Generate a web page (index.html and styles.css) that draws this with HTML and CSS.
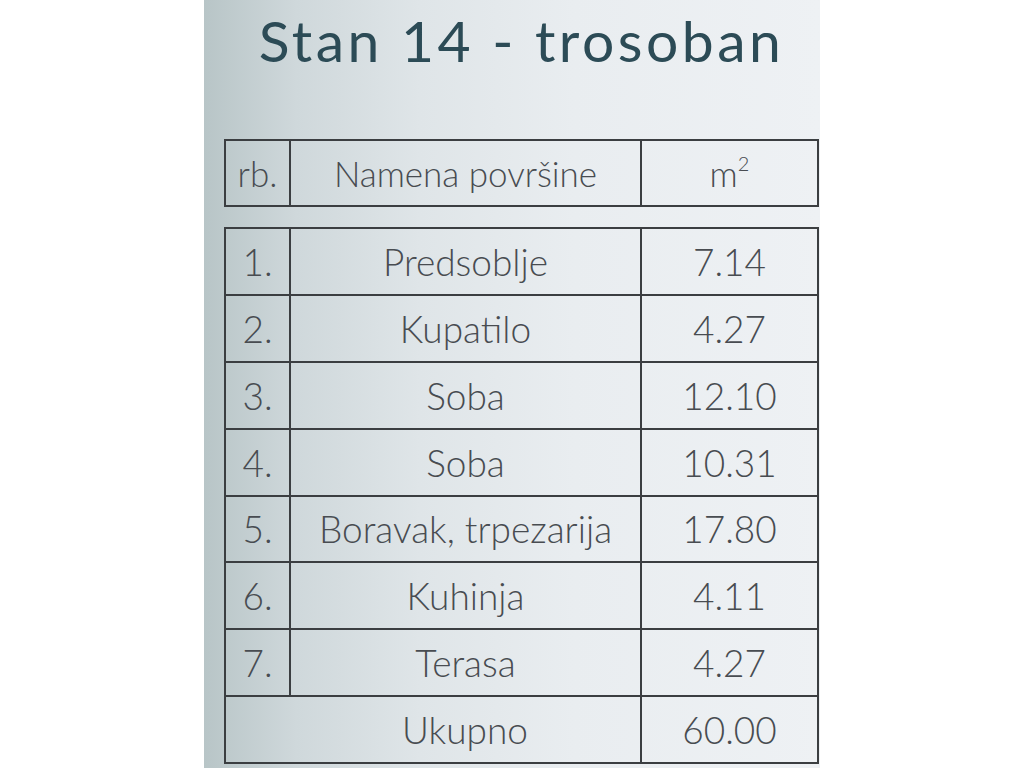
FILE: index.html
```html
<!DOCTYPE html>
<html lang="sr">
<head>
<meta charset="utf-8">
<title>Stan 14 - trosoban</title>
<link rel="stylesheet" href="styles.css">
</head>
<body>
<div class="panel">
  <h1 class="title">Stan 14 - trosoban</h1>
  <table class="grid head">
    <tr>
      <td class="c-rb">rb.</td>
      <td class="c-name">Namena površine</td>
      <td class="c-val">m<sup>2</sup></td>
    </tr>
  </table>
  <table class="grid body">
    <tr><td class="c-rb">1.</td><td class="c-name">Predsoblje</td><td class="c-val">7.14</td></tr>
    <tr><td class="c-rb">2.</td><td class="c-name">Kupatilo</td><td class="c-val">4.27</td></tr>
    <tr><td class="c-rb">3.</td><td class="c-name">Soba</td><td class="c-val">12.10</td></tr>
    <tr><td class="c-rb">4.</td><td class="c-name">Soba</td><td class="c-val">10.31</td></tr>
    <tr><td class="c-rb">5.</td><td class="c-name">Boravak, trpezarija</td><td class="c-val">17.80</td></tr>
    <tr><td class="c-rb">6.</td><td class="c-name">Kuhinja</td><td class="c-val">4.11</td></tr>
    <tr><td class="c-rb">7.</td><td class="c-name">Terasa</td><td class="c-val">4.27</td></tr>
    <tr><td class="c-total" colspan="2">Ukupno</td><td class="c-val">60.00</td></tr>
  </table>
</div>
</body>
</html>
```
FILE: styles.css
```css
html, body {
  margin: 0;
  padding: 0;
  background: #ffffff;
}
body {
  width: 1024px;
  height: 768px;
  overflow: hidden;
}
.panel {
  margin-left: 204px;
  width: 616px;
  height: 768px;
  box-sizing: border-box;
  padding: 0 1px 0 20px;
  background: linear-gradient(to right, #b8c5c7 0%, #cfd8db 15%, #dfe5e8 35%, #e9edf0 60%, #eef1f4 100%);
  display: flex;
  flex-direction: column;
  font-family: "Lato", "Liberation Sans", sans-serif;
}
.title {
  margin: 0;
  height: 139px;
  flex: none;
  padding-top: 10px;
  box-sizing: border-box;
  text-align: center;
  font-size: 57px;
  font-weight: 400;
  letter-spacing: 3.5px;
  color: #2c4b56;
  line-height: 60px;
}
.grid {
  border-collapse: collapse;
  width: 595px;
  table-layout: fixed;
  color: #484c51;
  font-size: 37px;
  font-weight: 300;
  flex: none;
}
.grid td {
  border: 2px solid #3b3e41;
  text-align: center;
  padding: 0;
  vertical-align: middle;
}
.c-rb { width: 63px; }
.c-name { width: 349px; }
.c-val { width: auto; }
.head { height: 68px; }
.head td { font-size: 35px; }
.head sup {
  font-size: 20px;
  vertical-align: 16px;
  line-height: 0;
}
.body {
  margin-top: 20px;
  height: 537px;
}
.c-total {
  padding-left: 64px !important;
}
```
